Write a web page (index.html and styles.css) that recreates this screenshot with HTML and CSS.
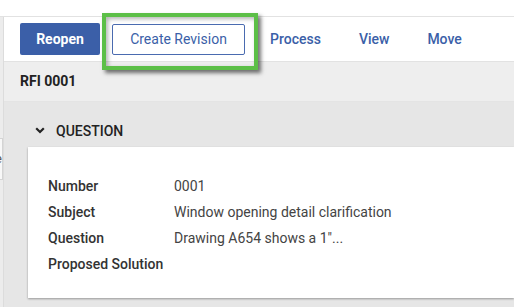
FILE: index.html
```html
<!DOCTYPE html>
<html lang="en">
<head>
    <meta charset="UTF-8">
    <title>RFI 0001</title>
    <link rel="stylesheet" href="styles.css">
</head>
<body>
    <div class="topbar"></div>
    <div class="main">
        <div class="side">
            <div class="side-tab">e</div>
        </div>
        <div class="content">
            <div class="toolbar">
                <button class="btn btn-primary">Reopen</button>
                <div class="highlight-wrap">
                    <button class="btn btn-outline">Create Revision</button>
                    <div class="highlight"></div>
                </div>
                <button class="btn btn-link first-link">Process</button>
                <button class="btn btn-link">View</button>
                <button class="btn btn-link">Move</button>
            </div>

            <div class="title-bar">RFI 0001</div>

            <div class="body">
                <div class="section-head">
                    <svg class="chevron" width="10" height="7" viewBox="0 0 10 7">
                        <path d="M1.2 1.2 L5 5 L8.8 1.2" fill="none" stroke="#222" stroke-width="2.2"/>
                    </svg>
                    <span>QUESTION</span>
                </div>
                <div class="card">
                    <div class="row"><div class="label">Number</div><div class="value">0001</div></div>
                    <div class="row"><div class="label">Subject</div><div class="value">Window opening detail clarification</div></div>
                    <div class="row"><div class="label">Question</div><div class="value">Drawing A654 shows a 1"...</div></div>
                    <div class="row"><div class="label">Proposed Solution</div><div class="value"></div></div>
                </div>
            </div>
        </div>
    </div>
</body>
</html>
```

FILE: styles.css
```css
body {
    margin: 0;
    font-family: Roboto, "Liberation Sans", Arial, sans-serif;
    background-color: #ffffff;
    color: #333;
    overflow: hidden;
}

.topbar {
    height: 16px;
    border-bottom: 1px solid #e2e2e2;
}

.main {
    display: flex;
    height: 290px;
}

.side {
    width: 3px;
    background-color: #ececec;
    overflow: hidden;
    padding-top: 121px;
}

.side-tab {
    height: 40px;
    width: 2px;
    background-color: #f8f8f8;
    border: 1px solid #d4d4d4;
    border-left: none;
    font-size: 13px;
    line-height: 40px;
    text-indent: -5px;
    color: #555;
}

.content {
    flex: 1;
    border-left: 1px solid #dcdcdc;
    display: flex;
    flex-direction: column;
}

.toolbar {
    height: 44px;
    display: flex;
    align-items: center;
    padding-left: 16px;
    border-bottom: 1px solid #e2e2e2;
}

.btn {
    font-family: Roboto, "Liberation Sans", Arial, sans-serif;
    font-size: 14px;
    height: 32px;
    border-radius: 2px;
    cursor: pointer;
}

.btn-primary {
    width: 80px;
    background-color: #3b5fa8;
    color: #fff;
    font-weight: 700;
    border: none;
}

.highlight-wrap {
    position: relative;
    margin-left: 12px;
}

.btn-outline {
    width: 133px;
    height: 31px;
    background-color: #fff;
    color: #3b5fa8;
    border: 1px solid #4a6bb0;
    display: block;
}

.highlight {
    position: absolute;
    left: -10px;
    top: -11px;
    right: -13px;
    bottom: -15px;
    border: 4px solid #5cbf47;
    box-shadow: 3px 3px 4px rgba(0, 0, 0, 0.55), inset 2px 2px 4px rgba(0, 0, 0, 0.3);
    pointer-events: none;
}

.btn-link {
    background: none;
    border: none;
    color: #3b5fa8;
    font-weight: 500;
    padding: 0 19px;
}

.first-link {
    margin-left: 6px;
}

.title-bar {
    height: 39px;
    line-height: 39px;
    background-color: #eeeeee;
    border-bottom: 1px solid #e4e4e4;
    padding-left: 16px;
    font-size: 14px;
    font-weight: 700;
    color: #222;
}

.body {
    flex: 1;
    background-color: #e6e6e6;
    padding-left: 24px;
}

.section-head {
    height: 33px;
    padding-top: 12px;
    display: flex;
    align-items: center;
    font-size: 14px;
    font-weight: 500;
    color: #222;
}

.chevron {
    margin-left: 7px;
    margin-right: 11px;
}

.card {
    background-color: #fff;
    box-shadow: 0 1px 2px rgba(0, 0, 0, 0.35);
    padding: 26px 20px 20px 20px;
    height: 105px;
}

.row {
    display: flex;
    height: 26px;
    align-items: center;
    font-size: 14px;
}

.label {
    width: 126px;
    font-weight: 500;
    color: #333;
}

.value {
    color: #444;
}
```
